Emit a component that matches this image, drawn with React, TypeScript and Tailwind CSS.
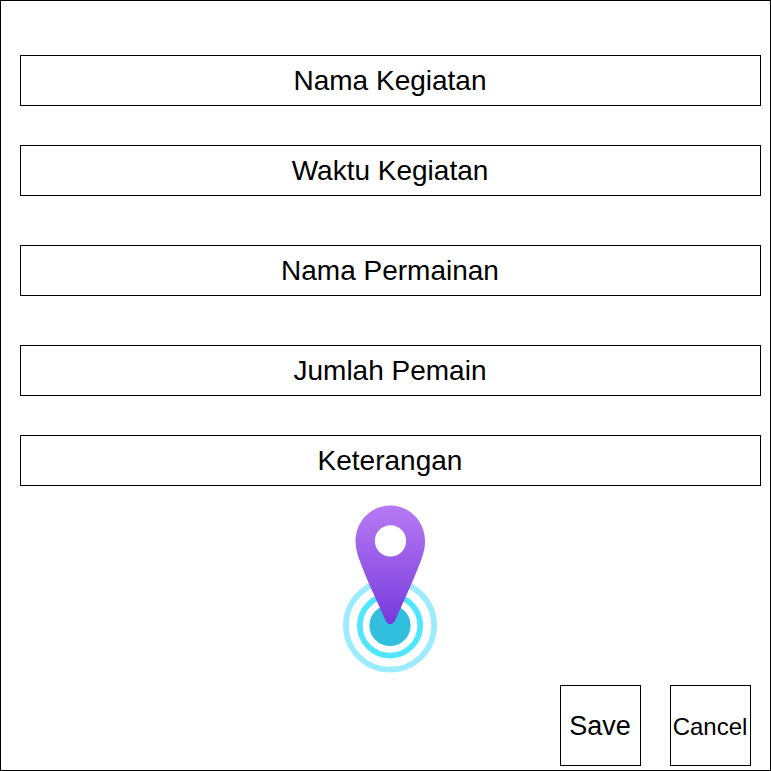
import React from "react";

const fields = [
  { label: "Nama Kegiatan", gap: "mt-[54px]" },
  { label: "Waktu Kegiatan", gap: "mt-[39px]" },
  { label: "Nama Permainan", gap: "mt-[49px]" },
  { label: "Jumlah Pemain", gap: "mt-[49px]" },
  { label: "Keterangan", gap: "mt-[39px]" },
];

function LocationPin() {
  return (
    <svg className="mt-[19px] ml-[322px] block h-[168px] w-[96px]" viewBox="342 505 96 168">
      <defs>
        <linearGradient id="pin" x1="0" y1="0" x2="0" y2="1">
          <stop offset="0" stopColor="#b77af4" />
          <stop offset="1" stopColor="#773adc" />
        </linearGradient>
      </defs>
      <circle cx="390" cy="625.5" r="44.1" fill="none" stroke="#9cebff" strokeWidth="5.7" />
      <circle cx="390" cy="625.5" r="30.2" fill="none" stroke="#50e6ff" strokeWidth="5.7" />
      <circle cx="390" cy="625.5" r="20.6" fill="#32bedd" />
      <path
        fill="url(#pin)"
        fillRule="evenodd"
        d="M390.3 505.5C371 505.5 355.5 521.5 355.5 541.5C355.5 549 358 556.5 361 564C364.8 573.5 367 579.5 374.3 595.5L385.8 621C387.5 625.1 393.1 625.1 394.8 621L406.3 595.5C413.6 579.5 415.8 573.5 419.6 564C422.6 556.5 425.1 549 425.1 541.5C425.1 521.5 409.6 505.5 390.3 505.5ZM390.5 525.3A15.6 15.6 0 1 1 390.5 556.5A15.6 15.6 0 1 1 390.5 525.3Z"
      />
    </svg>
  );
}

export default function App() {
  return (
    <main className="flex h-[771px] w-[771px] flex-col border border-black bg-white pl-[19px] font-['Liberation_Sans',Arial,sans-serif] text-black">
      {fields.map(({ label, gap }) => (
        <div key={label} className={`flex h-[51px] w-[741px] shrink-0 items-center justify-center border border-black pr-px text-[28px] leading-8 ${gap}`}>
          {label}
        </div>
      ))}
      <LocationPin />
      <div className="mt-3 ml-[540px] flex gap-[29px]">
        <button className="flex h-[81px] w-[81px] items-center justify-center border border-black pt-0.5 pr-px text-[27px]">Save</button>
        <button className="flex h-[81px] w-[81px] items-center justify-center border border-black pt-0.5 pr-px text-[24px]">Cancel</button>
      </div>
    </main>
  );
}
